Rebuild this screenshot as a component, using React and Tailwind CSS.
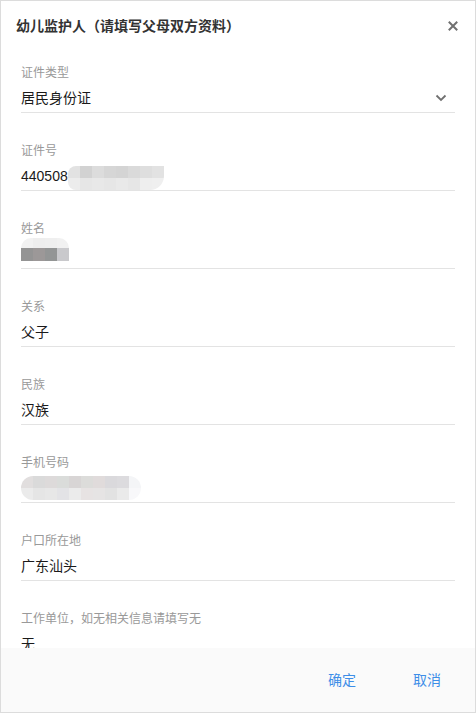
import React from "react";

const font = { fontFamily: '"Liberation Sans", "Noto Sans CJK SC", sans-serif' };

function Field({ label, children, right, last }) {
  return (
    <div className={"pt-[29px] pb-[4px] " + (last ? "" : "border-b border-[#e3e3e3]")}>
      <div className="text-[12px] leading-[18px] text-[#999999]">{label}</div>
      <div className="mt-[6px] flex items-center justify-between h-[20px] text-[14px] leading-[20px] text-[#1a1a1a]">
        <div className="flex items-center">{children}</div>
        {right}
      </div>
    </div>
  );
}

function Mosaic({ top, bottom, w = 12, h = 12, h2, className = "" }) {
  return (
    <div className={"flex flex-col overflow-hidden " + className}>
      <div className="flex">
        {top.map((c, i) => (
          <div key={i} style={{ background: c, width: w, height: h }} />
        ))}
      </div>
      <div className="flex">
        {bottom.map((c, i) => (
          <div key={i} style={{ background: c, width: w, height: h2 || h }} />
        ))}
      </div>
    </div>
  );
}

export default function App() {
  return (
    <div
      className="w-[476px] h-[713px] border border-[#dcdcdc] bg-white flex flex-col overflow-hidden"
      style={font}
    >
      <div className="h-[34px] shrink-0 pl-[15px] pr-[17px] pt-[16px] flex items-start justify-between">
        <div className="text-[14px] leading-[18px] font-bold text-[#333333]">
          幼儿监护人（请填写父母双方资料）
        </div>
        <svg width="10" height="10" viewBox="0 0 10 10" className="mt-[4px]">
          <path d="M1.5 1.5 L8.5 8.5 M8.5 1.5 L1.5 8.5" stroke="#707070" strokeWidth="2" strokeLinecap="square" />
        </svg>
      </div>
      <div className="flex-1 overflow-hidden px-5">
        <Field
          label="证件类型"
          right={
            <svg width="12" height="8" viewBox="0 0 12 8" className="mr-[8px]">
              <path d="M1.5 1.5 L6 6 L10.5 1.5" stroke="#707070" strokeWidth="1.8" fill="none" />
            </svg>
          }
        >
          居民身份证
        </Field>
        <Field label="证件号">
          <span>440508</span>
          <Mosaic
            className="rounded-l-[8px] rounded-br-[14px] mt-[4px]"
            w={12}
            h={12}
            top={["#e2e2e2", "#d2d2d2", "#dcdcdc", "#d6d6d6", "#d4d4d4", "#dadada", "#dedede", "#e2e2e2"]}
            bottom={["#ececec", "#e6e6e6", "#e8e8e8", "#e6e6e6", "#e9e9e9", "#e6e6e6", "#eeeeee", "#efefef"]}
          />
        </Field>
        <Field label="姓名">
          <Mosaic
            className="rounded-t-[10px] -mt-[9px]"
            w={12}
            h={10}
            h2={13}
            top={["#f2f2f2", "#eeeeee", "#efefef", "#f1f1f1"]}
            bottom={["#949494", "#9c9898", "#939595", "#c9c9cc"]}
          />
        </Field>
        <Field label="关系">父子</Field>
        <Field label="民族">汉族</Field>
        <Field label="手机号码">
          <Mosaic
            className="rounded-l-[12px] rounded-r-[12px]"
            w={12}
            h={12}
            top={["#e1dede", "#dadada", "#dddada", "#dadcda", "#d8d5d5", "#dcdcda", "#e0dbdb", "#dad9dc", "#dcdbde", "#f4f5f7"]}
            bottom={["#ebebeb", "#e5e5e5", "#e7e7e7", "#e3e3e6", "#ebebeb", "#e7e3e3", "#e6e4e4", "#e2e2e2", "#eaeaea", "#f8f8fa"]}
          />
        </Field>
        <Field label="户口所在地">广东汕头</Field>
        <Field label="工作单位，如无相关信息请填写无" last>
          无
        </Field>
      </div>
      <div className="h-16 shrink-0 bg-[#fafafa] flex items-center justify-end pr-[34px] gap-[57px] text-[14px] leading-[20px] text-[#3d8ee8]">
        <span>确定</span>
        <span>取消</span>
      </div>
    </div>
  );
}
